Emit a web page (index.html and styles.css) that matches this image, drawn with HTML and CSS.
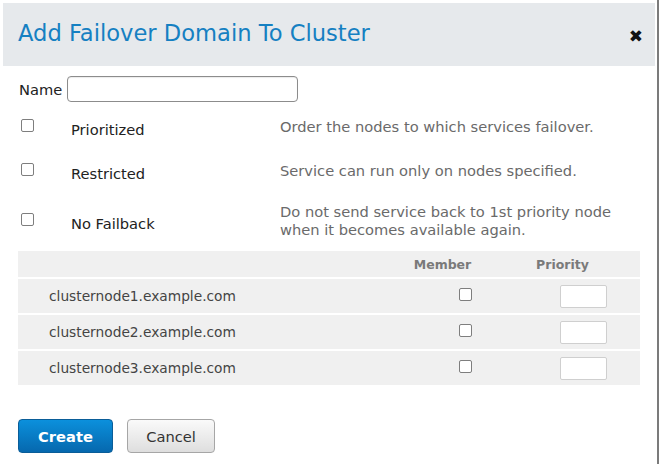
FILE: index.html
```html
<!DOCTYPE html>
<html>
<head>
<meta charset="utf-8">
<link rel="stylesheet" href="styles.css">
</head>
<body>
<div class="dialog">
  <div class="header">
    <h1 class="title">Add Failover Domain To Cluster</h1>
    <span class="close">✖</span>
  </div>
  <div class="content">
    <div class="name-row">
      <label class="name-label">Name</label>
      <input class="name-input" type="text">
    </div>
    <div class="options">
      <div class="option">
        <span class="opt-box"><input class="check" type="checkbox"></span>
        <span class="opt-label">Prioritized</span>
        <span class="opt-desc">Order the nodes to which services failover.</span>
      </div>
      <div class="option">
        <span class="opt-box"><input class="check" type="checkbox"></span>
        <span class="opt-label">Restricted</span>
        <span class="opt-desc">Service can run only on nodes specified.</span>
      </div>
      <div class="option">
        <span class="opt-box"><input class="check" type="checkbox"></span>
        <span class="opt-label">No Failback</span>
        <span class="opt-desc">Do not send service back to 1st priority node<br>when it becomes available again.</span>
      </div>
    </div>
    <div class="nodes">
      <div class="node-row head">
        <span></span>
        <span class="col-member">Member</span>
        <span class="col-priority">Priority</span>
      </div>
      <div class="node-row">
        <span class="node-name">clusternode1.example.com</span>
        <span class="cell-member"><input class="check" type="checkbox"></span>
        <span class="cell-priority"><input class="prio-input" type="text"></span>
      </div>
      <div class="node-row">
        <span class="node-name">clusternode2.example.com</span>
        <span class="cell-member"><input class="check" type="checkbox"></span>
        <span class="cell-priority"><input class="prio-input" type="text"></span>
      </div>
      <div class="node-row">
        <span class="node-name">clusternode3.example.com</span>
        <span class="cell-member"><input class="check" type="checkbox"></span>
        <span class="cell-priority"><input class="prio-input" type="text"></span>
      </div>
    </div>
    <div class="buttons">
      <button class="btn btn-primary">Create</button>
      <button class="btn btn-default">Cancel</button>
    </div>
  </div>
</div>
</body>
</html>
```

FILE: styles.css
```css
html, body {
  margin: 0;
  padding: 0;
  background: #ffffff;
}

body {
  font-family: "DejaVu Sans", Verdana, sans-serif;
  font-size: 14.67px;
  color: #222222;
}

.dialog {
  width: 659px;
  height: 464px;
  box-sizing: border-box;
  border-right: 2px solid #7b7b7b;
  background: #ffffff;
  overflow: hidden;
}

.header {
  margin: 3px 2px 0 3px;
  height: 63px;
  background: #e6e9ec;
  display: flex;
  align-items: center;
  justify-content: space-between;
  padding: 0 12px 0 15px;
}

.title {
  margin: 0;
  font-size: 22.6px;
  font-weight: normal;
  color: #1580c2;
  line-height: 1;
  padding-bottom: 2px;
}

.close {
  font-size: 17px;
  color: #111111;
  line-height: 1;
  padding-top: 4px;
}

.content {
  padding: 0 17px 0 18px;
}

.name-row {
  margin-top: 10px;
  display: flex;
  align-items: center;
  height: 26px;
}

.name-label {
  padding-left: 1px;
  color: #222222;
}

.name-input {
  margin: 0 0 0 5px;
  width: 231px;
  height: 26px;
  box-sizing: border-box;
  border: 1px solid #8c8c8c;
  border-radius: 4px;
  background: #ffffff;
  box-shadow: inset 0 1px 1px rgba(0, 0, 0, 0.08);
  outline: none;
  padding: 0 4px;
}

.options {
  margin-top: 13px;
  display: flex;
  flex-direction: column;
  gap: 20px;
}

.option {
  display: grid;
  grid-template-columns: 53px 209px 1fr;
  align-items: center;
}

.opt-box {
  display: flex;
  padding: 0 0 4px 3px;
}

.check {
  appearance: none;
  -webkit-appearance: none;
  margin: 0;
  width: 13px;
  height: 13px;
  box-sizing: border-box;
  border: 1px solid #7e7e7e;
  border-radius: 2px;
  background: #ffffff;
}

.opt-label {
  padding-top: 6px;
  line-height: 18px;
  color: #222222;
}

.opt-desc {
  line-height: 18px;
  color: #6a6a6a;
}

.nodes {
  margin-top: 12px;
  display: flex;
  flex-direction: column;
  gap: 2px;
}

.node-row {
  display: grid;
  grid-template-columns: 382px 85px 155px;
  align-items: center;
  height: 34px;
  background: #f0f0f0;
}

.node-row.head {
  height: 26px;
}

.col-member,
.col-priority {
  text-align: center;
  font-weight: bold;
  font-size: 12.5px;
  color: #7a7a7a;
}

.node-name {
  padding-left: 31px;
  font-size: 13.75px;
  color: #444444;
}

.cell-member {
  display: flex;
  justify-content: flex-end;
  padding: 0 13px 4px 0;
}

.cell-priority {
  display: flex;
  justify-content: flex-end;
  padding-right: 33px;
}

.prio-input {
  margin: 0;
  width: 47px;
  height: 23px;
  box-sizing: border-box;
  border: 1px solid #cfcfcf;
  border-radius: 2px;
  background: #ffffff;
  outline: none;
}

.buttons {
  margin-top: 34px;
  display: flex;
  gap: 14px;
}

.btn {
  height: 34px;
  box-sizing: border-box;
  border-radius: 4px;
  font-family: "DejaVu Sans", Verdana, sans-serif;
  font-size: 14.67px;
  padding: 0;
}

.btn-primary {
  width: 95px;
  font-weight: bold;
  color: #ffffff;
  border: 1px solid #0a5d98;
  background: linear-gradient(#0b90dc, #0668ae);
}

.btn-default {
  width: 88px;
  color: #333333;
  border: 1px solid #a6a6a6;
  background: linear-gradient(#fafafa, #dedede);
}
```
